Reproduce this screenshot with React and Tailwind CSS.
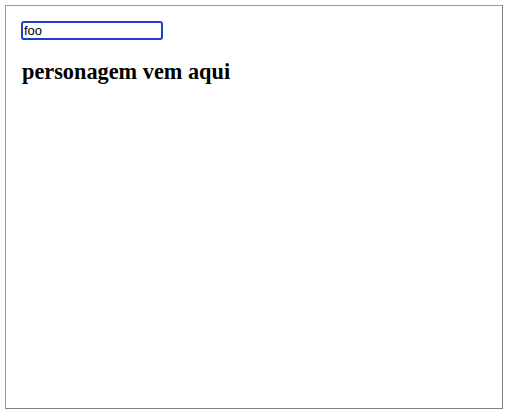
export default function App() {
  return (
    <div className="w-[512px] h-[418px] bg-white p-[5px]">
      <div className="w-[498px] h-[404px] border border-[#9a9a9a] border-r-[#808080] border-b-[#808080] px-[15px] pt-[15px]">
        <input
          defaultValue="foo"
          className="block w-[142px] h-[19px] border-2 border-[#1f3fcc] rounded-[3px] px-[1px] text-[13px] leading-none text-black outline-none"
          style={{ fontFamily: '"Liberation Sans", Arial, sans-serif' }}
        />
        <h2
          className="mt-[19px] ml-[1px] text-[22.3px] font-bold text-black leading-[26px]"
          style={{ fontFamily: '"Liberation Serif", "Times New Roman", serif' }}
        >
          personagem vem aqui
        </h2>
      </div>
    </div>
  );
}
